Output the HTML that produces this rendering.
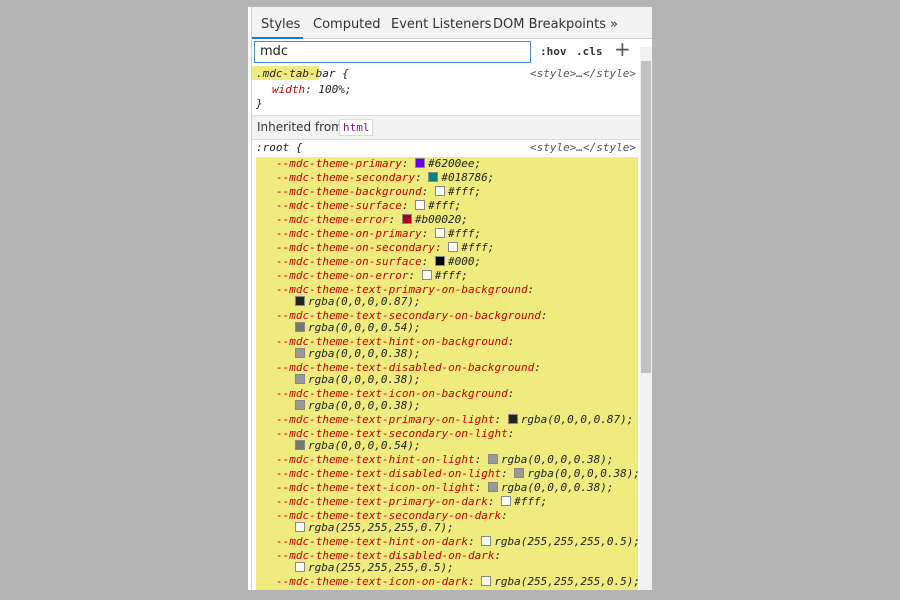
<!DOCTYPE html>
<html><head><meta charset="utf-8"><style>
*{margin:0;padding:0;box-sizing:border-box}
body{width:900px;height:600px;background:#b4b4b4;position:relative;overflow:hidden;font-family:"DejaVu Sans","Liberation Sans",sans-serif}
#panel{position:absolute;left:248px;top:7px;width:404px;height:583px;background:#fff;overflow:hidden}
#lb{position:absolute;left:3px;top:0;width:1px;height:583px;background:#d0d0d0}
#tabs{position:absolute;left:4px;top:0;width:400px;height:32px;background:#f3f3f3;border-bottom:1px solid #ccc;font-size:13px;color:#333}
#tabs span{position:absolute;top:10px}
#sel{position:absolute;left:4px;top:30px;width:51px;height:2px;background:#1a73e8}
#filter{position:absolute;left:6px;top:34px;width:277px;height:22px;border:1px solid #4a90d9;background:#fff;font-size:13px;padding:2px 5px;color:#222}
.tb{position:absolute;top:38px;font-family:"DejaVu Sans Mono",monospace;font-size:11px;font-weight:bold;color:#333}
#sb{position:absolute;left:392px;top:40px;width:12px;height:543px;background:#f1f1f1}
#thumb{position:absolute;left:393px;top:54px;width:10px;height:312px;background:#c1c1c1}
.m{position:absolute;font-family:"DejaVu Sans Mono",monospace;font-size:11px;font-style:italic;line-height:14px;height:14px;white-space:pre;color:#222}
.p{color:#c80000}
.sw{display:inline-block;width:10px;height:10px;border:1px solid #888;vertical-align:-1px;margin-right:3px}
#yel{position:absolute;left:8px;top:150px;width:382px;height:440px;background:#f0eb7e}
.sep{position:absolute;left:4px;width:388px;height:1px;background:#ddd}
</style></head><body>
<div id="panel">
<div id="lb"></div>
<div id="tabs"><span style="left:9px">Styles</span><span style="left:61px">Computed</span><span style="left:139px">Event Listeners</span><span style="left:241px">DOM Breakpoints</span><span style="left:358px">»</span></div>
<div id="sel"></div>
<div id="filter">mdc</div>
<div class="tb" style="left:292px">:hov</div><div class="tb" style="left:328px">.cls</div>
<div style="position:absolute;left:366px;top:30px;font-size:20px;color:#555">+</div>
<div id="sb"></div><div id="thumb"></div>
<div style="position:absolute;left:4px;top:59px;width:67px;height:14px;background:#f0eb7e"></div>
<div class="m" style="left:8px;top:60px">.mdc-tab-bar {</div>
<div class="m" style="left:282px;top:60px;color:#555">&lt;style&gt;…&lt;/style&gt;</div>
<div class="m" style="left:24px;top:76px"><span class="p">width</span>: 100%;</div>
<div class="m" style="left:8px;top:90px">}</div>
<div class="sep" style="top:108px"></div>
<div style="position:absolute;left:4px;top:109px;width:388px;height:23px;background:#f3f3f3"></div>
<div style="position:absolute;left:9px;top:113px;font-size:12px;color:#333">Inherited from</div>
<div style="position:absolute;left:91px;top:112px;width:34px;height:17px;border:1px solid #ddd;background:#fff;font-family:'DejaVu Sans Mono',monospace;font-size:11px;color:#881280;padding:1px 3px">html</div>
<div class="sep" style="top:132px"></div>
<div class="m" style="left:8px;top:134px">:root {</div>
<div class="m" style="left:282px;top:134px;color:#555">&lt;style&gt;…&lt;/style&gt;</div>
<div id="yel"></div>
<div class="m" style="left:28px;top:150px"><span class="p">--mdc-theme-primary</span>: <span class="sw" style="background:#6200ee"></span>#6200ee;</div>
<div class="m" style="left:28px;top:164px"><span class="p">--mdc-theme-secondary</span>: <span class="sw" style="background:#018786"></span>#018786;</div>
<div class="m" style="left:28px;top:178px"><span class="p">--mdc-theme-background</span>: <span class="sw" style="background:#fff"></span>#fff;</div>
<div class="m" style="left:28px;top:192px"><span class="p">--mdc-theme-surface</span>: <span class="sw" style="background:#fff"></span>#fff;</div>
<div class="m" style="left:28px;top:206px"><span class="p">--mdc-theme-error</span>: <span class="sw" style="background:#b00020"></span>#b00020;</div>
<div class="m" style="left:28px;top:220px"><span class="p">--mdc-theme-on-primary</span>: <span class="sw" style="background:#fff"></span>#fff;</div>
<div class="m" style="left:28px;top:234px"><span class="p">--mdc-theme-on-secondary</span>: <span class="sw" style="background:#fff"></span>#fff;</div>
<div class="m" style="left:28px;top:248px"><span class="p">--mdc-theme-on-surface</span>: <span class="sw" style="background:#000"></span>#000;</div>
<div class="m" style="left:28px;top:262px"><span class="p">--mdc-theme-on-error</span>: <span class="sw" style="background:#fff"></span>#fff;</div>
<div class="m" style="left:28px;top:276px"><span class="p">--mdc-theme-text-primary-on-background</span>:</div>
<div class="m" style="left:47px;top:288px"><span class="sw" style="background:#222"></span>rgba(0,0,0,0.87);</div>
<div class="m" style="left:28px;top:302px"><span class="p">--mdc-theme-text-secondary-on-background</span>:</div>
<div class="m" style="left:47px;top:314px"><span class="sw" style="background:#777"></span>rgba(0,0,0,0.54);</div>
<div class="m" style="left:28px;top:328px"><span class="p">--mdc-theme-text-hint-on-background</span>:</div>
<div class="m" style="left:47px;top:340px"><span class="sw" style="background:#999"></span>rgba(0,0,0,0.38);</div>
<div class="m" style="left:28px;top:354px"><span class="p">--mdc-theme-text-disabled-on-background</span>:</div>
<div class="m" style="left:47px;top:366px"><span class="sw" style="background:#999"></span>rgba(0,0,0,0.38);</div>
<div class="m" style="left:28px;top:380px"><span class="p">--mdc-theme-text-icon-on-background</span>:</div>
<div class="m" style="left:47px;top:392px"><span class="sw" style="background:#999"></span>rgba(0,0,0,0.38);</div>
<div class="m" style="left:28px;top:406px"><span class="p">--mdc-theme-text-primary-on-light</span>: <span class="sw" style="background:#222"></span>rgba(0,0,0,0.87);</div>
<div class="m" style="left:28px;top:420px"><span class="p">--mdc-theme-text-secondary-on-light</span>:</div>
<div class="m" style="left:47px;top:432px"><span class="sw" style="background:#777"></span>rgba(0,0,0,0.54);</div>
<div class="m" style="left:28px;top:446px"><span class="p">--mdc-theme-text-hint-on-light</span>: <span class="sw" style="background:#999"></span>rgba(0,0,0,0.38);</div>
<div class="m" style="left:28px;top:460px"><span class="p">--mdc-theme-text-disabled-on-light</span>: <span class="sw" style="background:#999"></span>rgba(0,0,0,0.38);</div>
<div class="m" style="left:28px;top:474px"><span class="p">--mdc-theme-text-icon-on-light</span>: <span class="sw" style="background:#999"></span>rgba(0,0,0,0.38);</div>
<div class="m" style="left:28px;top:488px"><span class="p">--mdc-theme-text-primary-on-dark</span>: <span class="sw" style="background:#fff"></span>#fff;</div>
<div class="m" style="left:28px;top:502px"><span class="p">--mdc-theme-text-secondary-on-dark</span>:</div>
<div class="m" style="left:47px;top:514px"><span class="sw" style="background:#fbfbf3"></span>rgba(255,255,255,0.7);</div>
<div class="m" style="left:28px;top:528px"><span class="p">--mdc-theme-text-hint-on-dark</span>: <span class="sw" style="background:#f8f8ee"></span>rgba(255,255,255,0.5);</div>
<div class="m" style="left:28px;top:542px"><span class="p">--mdc-theme-text-disabled-on-dark</span>:</div>
<div class="m" style="left:47px;top:554px"><span class="sw" style="background:#f8f8ee"></span>rgba(255,255,255,0.5);</div>
<div class="m" style="left:28px;top:568px"><span class="p">--mdc-theme-text-icon-on-dark</span>: <span class="sw" style="background:#f8f8ee"></span>rgba(255,255,255,0.5);</div>
</div>
</body></html>
